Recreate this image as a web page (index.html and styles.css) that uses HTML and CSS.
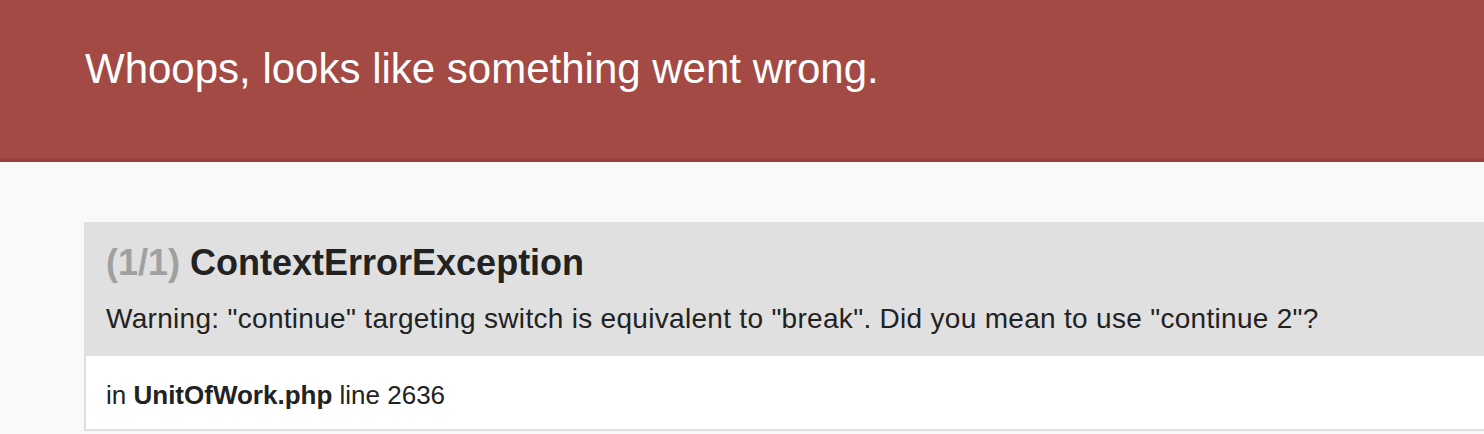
FILE: index.html
```html
<!DOCTYPE html>
<html>
<head>
<meta charset="utf-8">
<link rel="stylesheet" href="styles.css">
</head>
<body>
<div class="summary">
  <h1 class="headline">Whoops, looks like something went wrong.</h1>
</div>
<div class="content">
  <div class="block">
    <div class="block-head">
      <h2 class="title"><span class="count">(1/1)</span> ContextErrorException</h2>
      <p class="message">Warning: "continue" targeting switch is equivalent to "break". Did you mean to use "continue 2"?</p>
    </div>
    <div class="trace">in <strong>UnitOfWork.php</strong> line 2636</div>
  </div>
</div>
</body>
</html>
```
FILE: styles.css
```css
html, body {
  margin: 0;
  padding: 0;
}
body {
  background: #f9f9f9;
  color: #222;
  font-family: "Liberation Sans", Arial, sans-serif;
  overflow: hidden;
}
.summary {
  background: #a44a45;
  border-bottom: 4px solid #973f3b;
  height: 158px;
  display: flex;
  align-items: center;
  padding-left: 85px;
}
.headline {
  margin: 0 0 21px 0;
  color: #fff;
  font-weight: normal;
  font-size: 42px;
  line-height: 50px;
  white-space: nowrap;
}
.content {
  padding: 60px 0 0 84px;
}
.block {
  background: #e0e0e0;
}
.block-head {
  padding: 19px 22px 20px 22px;
}
.title {
  margin: 0;
  font-size: 36px;
  line-height: 44px;
  font-weight: bold;
  color: #222;
  white-space: nowrap;
}
.count {
  color: #a0a0a0;
}
.message {
  margin: 17px 0 0 0;
  font-size: 28px;
  letter-spacing: 0.3px;
  line-height: 34px;
  white-space: nowrap;
}
.trace {
  background: #fff;
  margin-left: 2px;
  border-bottom: 2px solid #e0e0e0;
  padding: 24px 20px 19px 20px;
  font-size: 26px;
  line-height: 30px;
  white-space: nowrap;
}
.trace strong {
  font-weight: bold;
}
```
